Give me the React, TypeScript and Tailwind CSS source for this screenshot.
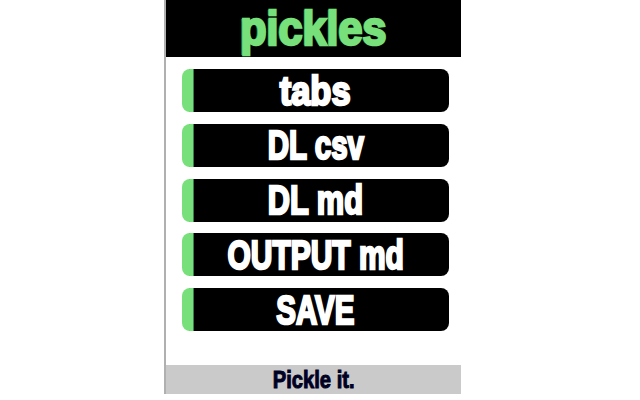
const items = [
  { t: "tabs", c: "scale-x-[0.84]" },
  { t: "DL csv", c: "scale-x-[0.72]" },
  { t: "DL md", c: "scale-x-[0.75]" },
  { t: "OUTPUT md", c: "scale-x-[0.73]" },
  { t: "SAVE", c: "scale-x-[0.72]" },
];

export default function App() {
  return (
    <div className="w-[640px] h-[400px] bg-white overflow-hidden font-['Liberation_Sans',Arial,sans-serif]">
      <div className="ml-[164px] w-[297px] h-[394px] border-l-2 border-[#b0b0b0] flex flex-col">
        <div className="h-[57px] bg-black flex items-center justify-center">
          <span className="inline-block scale-x-[0.9] text-[48px] leading-none font-bold text-[#77e07a] [-webkit-text-stroke:2.5px_#77e07a] [text-shadow:-2px_0_0_#1f7a3c]">
            pickles
          </span>
        </div>
        <div className="flex-1 flex flex-col gap-[11.75px] pt-[12px] pl-[16px] pr-[12px]">
          {items.map(({ t, c }) => (
            <button
              key={t}
              className="h-[43px] w-full bg-black rounded-[8px] border-l-[11px] border-[#77e07a] pr-[11px] pt-[1px] flex items-center justify-center shadow-[inset_1px_0_0_#3f7f4f]"
            >
              <span className={`inline-block whitespace-nowrap text-[41px] leading-none font-bold text-white [-webkit-text-stroke:2.5px_white] ${c}`}>
                {t}
              </span>
            </button>
          ))}
        </div>
        <div className="h-[29px] bg-[#cacaca] flex items-center justify-center">
          <span className="inline-block scale-x-[0.84] text-[24px] leading-none font-bold text-[#000022] [-webkit-text-stroke:1px_#000022]">
            Pickle it.
          </span>
        </div>
      </div>
    </div>
  );
}
